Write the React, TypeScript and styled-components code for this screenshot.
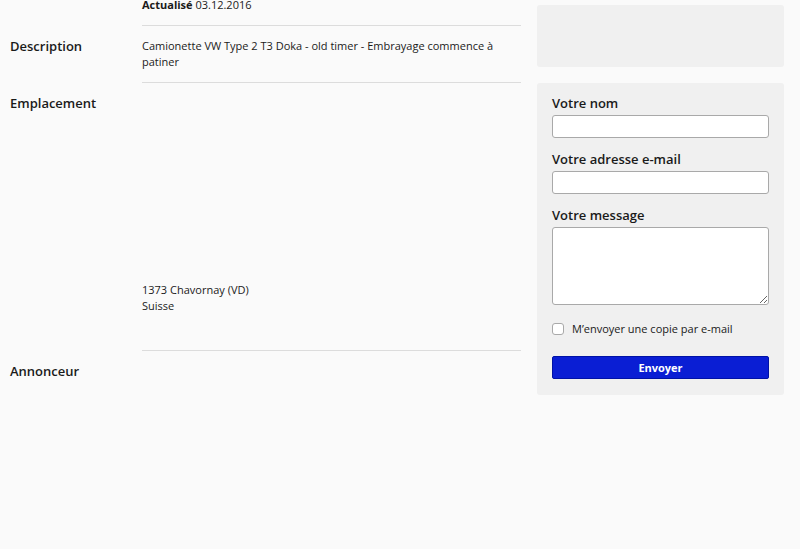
import React from 'react';
import styled, { createGlobalStyle } from 'styled-components';

const GlobalStyle = createGlobalStyle`
  html, body {
    margin: 0;
    padding: 0;
    background: #fafafa;
  }
  body {
    font-family: "Open Sans", "Liberation Sans", sans-serif;
    color: #1a1a1a;
    overflow: hidden;
  }
`;

const Page = styled.div`
  display: flex;
  align-items: flex-start;
  gap: 16px;
  width: 800px;
  height: 549px;
  box-sizing: border-box;
  padding: 5px 16px 0 10px;
  overflow: hidden;
`;

const Main = styled.div`
  width: 511px;
  display: flex;
  flex-direction: column;
`;

const Row = styled.div`
  display: grid;
  grid-template-columns: 132px 379px;
`;

const Label = styled.div`
  font-size: 13px;
  font-weight: 600;
  line-height: 16px;
  padding-top: 12px;
`;

const Value = styled.div<{ last?: boolean; bottom?: number }>`
  font-size: 11px;
  line-height: 16px;
  padding: 12px 0 ${({ bottom }) => bottom ?? 12}px;
  border-bottom: ${({ last }) => (last ? 'none' : '1px solid #dcdcdc')};
`;

const MetaValue = styled(Value)`
  margin-top: -20px;
`;

const Strong = styled.span`
  font-weight: 700;
`;

const MapSpace = styled.div`
  height: 187px;
`;

const Sidebar = styled.div`
  width: 247px;
  display: flex;
  flex-direction: column;
  gap: 16px;
`;

const Box = styled.div`
  background: #f0f0f0;
  border-radius: 3px;
`;

const EmptyBox = styled(Box)`
  height: 62px;
`;

const Form = styled(Box)`
  display: flex;
  flex-direction: column;
  padding: 12px 15px 16px;
`;

const FieldLabel = styled.label`
  font-size: 13px;
  font-weight: 600;
  line-height: 16px;
  margin-bottom: 4px;
`;

const Input = styled.input`
  height: 23px;
  box-sizing: border-box;
  border: 1px solid #a9a9a9;
  border-radius: 3px;
  background: #fff;
  margin: 0 0 13px;
`;

const TextArea = styled.textarea`
  height: 78px;
  box-sizing: border-box;
  border: 1px solid #a9a9a9;
  border-radius: 3px;
  background: #fff;
  margin: 0;
  resize: both;
`;

const CheckRow = styled.label`
  display: flex;
  align-items: center;
  gap: 8px;
  margin-top: 16px;
  font-size: 11px;
  line-height: 16px;
`;

const Check = styled.span`
  width: 12px;
  height: 12px;
  box-sizing: border-box;
  border: 1px solid #a9a9a9;
  border-radius: 3px;
  background: #fff;
`;

const SendButton = styled.button`
  margin-top: 19px;
  height: 23px;
  border: 1px solid #0012a6;
  border-radius: 2px;
  background: #0a1ed4;
  color: #fff;
  font-family: "Open Sans", "Liberation Sans", sans-serif;
  font-size: 11px;
  font-weight: 700;
  cursor: pointer;
`;

export default function App() {
  return (
    <>
      <GlobalStyle />
      <Page>
        <Main>
          <Row>
            <div />
            <MetaValue>
              <Strong>Actualisé</Strong> 03.12.2016
            </MetaValue>
          </Row>
          <Row>
            <Label>Description</Label>
            <Value>Camionette VW Type 2 T3 Doka - old timer - Embrayage commence à patiner</Value>
          </Row>
          <Row>
            <Label>Emplacement</Label>
            <Value bottom={36}>
              <MapSpace />
              1373 Chavornay (VD)
              <br />
              Suisse
            </Value>
          </Row>
          <Row>
            <Label>Annonceur</Label>
            <Value last />
          </Row>
        </Main>
        <Sidebar>
          <EmptyBox />
          <Form>
            <FieldLabel>Votre nom</FieldLabel>
            <Input type="text" />
            <FieldLabel>Votre adresse e-mail</FieldLabel>
            <Input type="email" />
            <FieldLabel>Votre message</FieldLabel>
            <TextArea />
            <CheckRow>
              <Check />
              M’envoyer une copie par e-mail
            </CheckRow>
            <SendButton>Envoyer</SendButton>
          </Form>
        </Sidebar>
      </Page>
    </>
  );
}
